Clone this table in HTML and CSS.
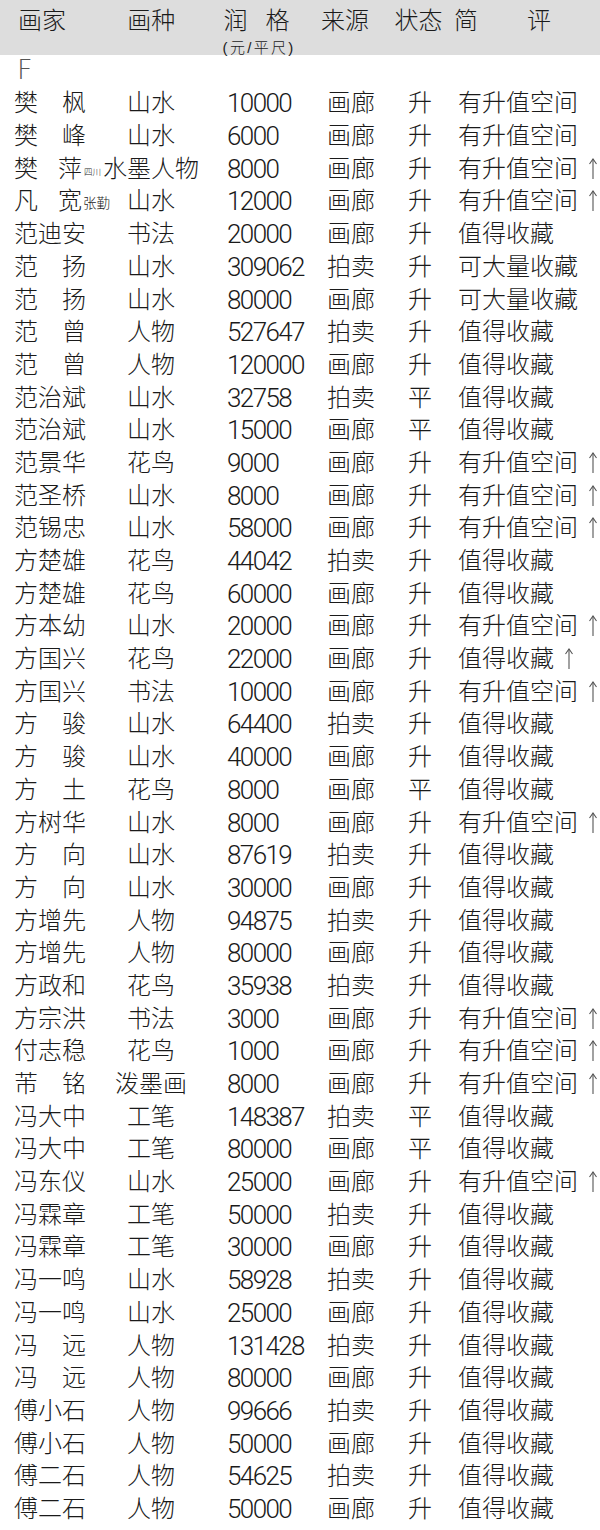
FILE: index.html
```html
<!DOCTYPE html>
<html lang="zh-CN">
<head>
<meta charset="utf-8">
<title>画家润格表 F</title>
<link rel="stylesheet" href="styles.css">
</head>
<body>
<div class="page">
  <div class="head">
    <div class="hc c1">画家</div>
    <div class="hc c2">画种</div>
    <div class="hc c3"><div class="sp18">润格</div><div class="sub">(元/平尺)</div></div>
    <div class="hc c4">来源</div>
    <div class="hc c5">状态</div>
    <div class="hc c6"><span class="sp49">简评</span></div>
  </div>
  <div class="letter">F</div>
  <div class="table" id="table"></div>
</div>
<script src="app.js"></script>
</body>
</html>
```

FILE: styles.css
```css
* { box-sizing: border-box; }
html, body { margin: 0; padding: 0; background: #fff; }
body {
  width: 600px;
  font-family: "Liberation Sans", "Noto Sans CJK SC", sans-serif;
  font-weight: 300;
  color: #1a1a1a;
}
.page { width: 600px; }
.head {
  height: 55px;
  background: #dddddd;
  display: flex;
  padding-left: 18px;
  font-size: 24px;
}
.hc { line-height: 38px; padding-top: 2px; white-space: nowrap; }
.c1 { width: 110px; }
.c2 { width: 97px; }
.c3 { width: 98px; }
.c4 { width: 74px; }
.c5 { width: 60px; }
.c6 { flex: 1; }
.sp18 { letter-spacing: 18px; }
.sp49 { letter-spacing: 49px; }
.sub {
  font-size: 15px;
  line-height: 15px;
  letter-spacing: 2.3px;
  margin-left: -1px;
}
.letter {
  font-family: "DejaVu Sans", sans-serif;
  font-weight: 200;
  font-size: 27px;
  line-height: 30.4px;
  padding: 0 0 2px 17px;
  color: #555;
}
.row {
  display: grid;
  grid-template-columns: 86px 102px 125px 81px 50px 1fr;
  padding-left: 14px;
  height: 32.7px;
  line-height: 32.7px;
  font-size: 24px;
  white-space: nowrap;
}
.name .gap { display: inline-block; width: 20px; }
.name .note { font-size: 13.5px; vertical-align: 1px; margin-left: 1px; }
.name .note.tiny { font-size: 8.5px; vertical-align: 2px; margin-left: 2px; }
.kind { text-align: center; }
.price {
  padding-left: 25px;
  font-family: Roboto, "Liberation Sans", sans-serif;
  font-weight: 300;
  font-size: 26px;
  letter-spacing: -1.6px;
}
.up {
  display: inline-block;
  width: 10px;
  height: 21px;
  margin-left: 10px;
  vertical-align: -2px;
}
```

FILE: app.js
```javascript
var rows = [
  ["樊　枫","山水","10000","画廊","升","有升值空间",0],
  ["樊　峰","山水","6000","画廊","升","有升值空间",0],
  ["樊<span class=\"gap\"></span>萍<span class=\"note tiny\">四川</span>","水墨人物","8000","画廊","升","有升值空间",1],
  ["凡<span class=\"gap\"></span>宽<span class=\"note\">张勤</span>","山水","12000","画廊","升","有升值空间",1],
  ["范迪安","书法","20000","画廊","升","值得收藏",0],
  ["范　扬","山水","309062","拍卖","升","可大量收藏",0],
  ["范　扬","山水","80000","画廊","升","可大量收藏",0],
  ["范　曾","人物","527647","拍卖","升","值得收藏",0],
  ["范　曾","人物","120000","画廊","升","值得收藏",0],
  ["范治斌","山水","32758","拍卖","平","值得收藏",0],
  ["范治斌","山水","15000","画廊","平","值得收藏",0],
  ["范景华","花鸟","9000","画廊","升","有升值空间",1],
  ["范圣桥","山水","8000","画廊","升","有升值空间",1],
  ["范锡忠","山水","58000","画廊","升","有升值空间",1],
  ["方楚雄","花鸟","44042","拍卖","升","值得收藏",0],
  ["方楚雄","花鸟","60000","画廊","升","值得收藏",0],
  ["方本幼","山水","20000","画廊","升","有升值空间",1],
  ["方国兴","花鸟","22000","画廊","升","值得收藏",1],
  ["方国兴","书法","10000","画廊","升","有升值空间",1],
  ["方　骏","山水","64400","拍卖","升","值得收藏",0],
  ["方　骏","山水","40000","画廊","升","值得收藏",0],
  ["方　土","花鸟","8000","画廊","平","值得收藏",0],
  ["方树华","山水","8000","画廊","升","有升值空间",1],
  ["方　向","山水","87619","拍卖","升","值得收藏",0],
  ["方　向","山水","30000","画廊","升","值得收藏",0],
  ["方增先","人物","94875","拍卖","升","值得收藏",0],
  ["方增先","人物","80000","画廊","升","值得收藏",0],
  ["方政和","花鸟","35938","拍卖","升","值得收藏",0],
  ["方宗洪","书法","3000","画廊","升","有升值空间",1],
  ["付志稳","花鸟","1000","画廊","升","有升值空间",1],
  ["芾　铭","泼墨画","8000","画廊","升","有升值空间",1],
  ["冯大中","工笔","148387","拍卖","平","值得收藏",0],
  ["冯大中","工笔","80000","画廊","平","值得收藏",0],
  ["冯东仪","山水","25000","画廊","升","有升值空间",1],
  ["冯霖章","工笔","50000","拍卖","升","值得收藏",0],
  ["冯霖章","工笔","30000","画廊","升","值得收藏",0],
  ["冯一鸣","山水","58928","拍卖","升","值得收藏",0],
  ["冯一鸣","山水","25000","画廊","升","值得收藏",0],
  ["冯　远","人物","131428","拍卖","升","值得收藏",0],
  ["冯　远","人物","80000","画廊","升","值得收藏",0],
  ["傅小石","人物","99666","拍卖","升","值得收藏",0],
  ["傅小石","人物","50000","画廊","升","值得收藏",0],
  ["傅二石","人物","54625","拍卖","升","值得收藏",0],
  ["傅二石","人物","50000","画廊","升","值得收藏",0]
];
var arrow = '<svg class="up" viewBox="0 0 10 21"><line x1="5" y1="1" x2="5" y2="21" stroke="#555" stroke-width="1.1"/><polyline points="1.5,6 5,1 8.5,6" fill="none" stroke="#555" stroke-width="1.1"/></svg>';
var html = "";
rows.forEach(function (r) {
  html += '<div class="row">' +
    '<div class="name">' + r[0] + '</div>' +
    '<div class="kind">' + r[1] + '</div>' +
    '<div class="price">' + r[2] + '</div>' +
    '<div class="src">' + r[3] + '</div>' +
    '<div class="st">' + r[4] + '</div>' +
    '<div class="cm">' + r[5] + (r[6] ? arrow : '') + '</div>' +
    '</div>';
});
document.getElementById("table").innerHTML = html;
```
